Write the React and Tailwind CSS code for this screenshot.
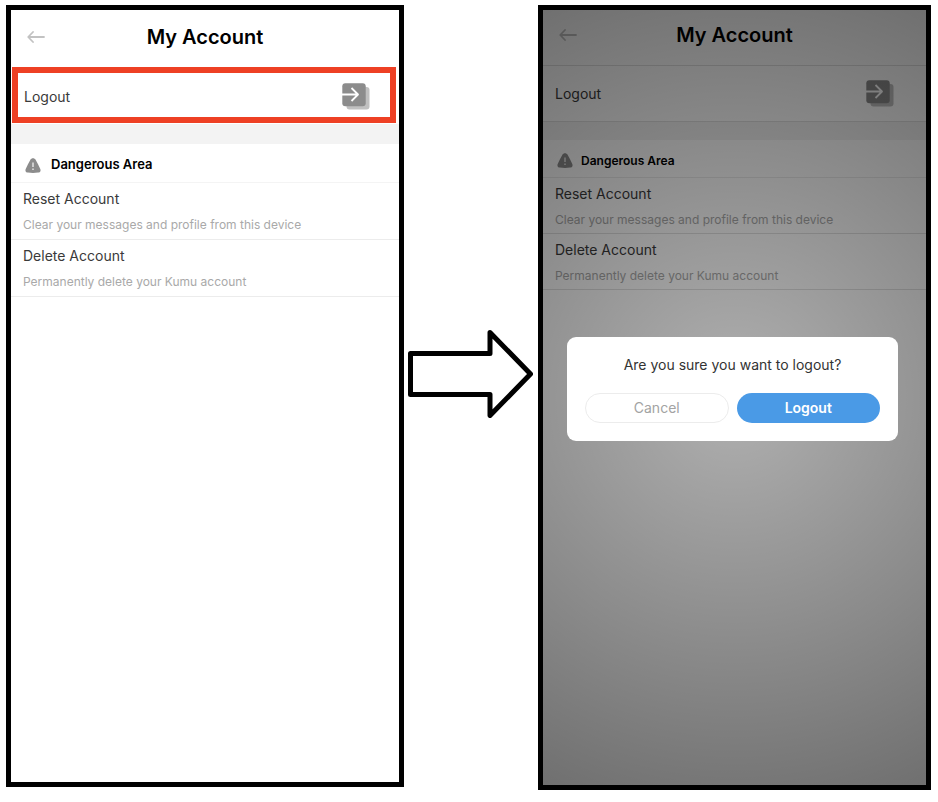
import clsx from 'clsx';

function BackIcon() {
    return (
        <svg width="18" height="12" viewBox="0 0 18 12" fill="none" stroke="#c2c2c2" strokeWidth="1.8" strokeLinecap="round" strokeLinejoin="round" aria-hidden="true">
            <path d="M17 6H1.5M6 1 1.2 6 6 11" />
        </svg>
    );
}

function LogoutIcon() {
    return (
        <svg width="28" height="27" viewBox="0 0 28 27" fill="none" aria-hidden="true">
            <rect x="4.5" y="4" width="23" height="22.5" rx="3" fill="#c0c0c0" />
            <rect x="0.3" y="0.3" width="23.4" height="23" rx="3" fill="#8c8c8c" />
            <path d="M0 11.5h16.5M9.5 5l6.5 6.5-6.5 6.5" stroke="#fff" strokeWidth="1.8" strokeLinejoin="round" />
        </svg>
    );
}

function WarningIcon() {
    return (
        <svg width="16" height="15" viewBox="0 0 16 15" aria-hidden="true">
            <path
                d="M5.4 1.7C6.5-.3 9.5-.3 10.6 1.7c1.7 2.8 3.2 5.8 4.7 9.2.8 1.9-.2 3.5-2.2 3.7-3.4.4-6.8.4-10.2 0-2-.2-3-1.8-2.2-3.7C2.2 7.5 3.7 4.5 5.4 1.7Z"
                fill="#8c8c8c"
            />
            <path d="M8 4.5V9M8 10.500V12" stroke="#e4e4e4" strokeWidth="1.5" />
        </svg>
    );
}

function ArrowRight() {
    return (
        <svg viewBox="0 0 125 88" className="w-full" fill="none" stroke="#000" strokeWidth="5" strokeLinejoin="round" aria-hidden="true">
            <path d="M2.5 23.5H82V2.5L122.5 44 82 85.5V64.5H2.5Z" />
        </svg>
    );
}

const options = [
    { title: 'Reset Account', text: 'Clear your messages and profile from this device' },
    { title: 'Delete Account', text: 'Permanently delete your Kumu account' },
];

function AccountScreen({ highlight, compact }) {
    return (
        <div className="text-[14px]">
            <header
                className={clsx(
                    'grid h-14 grid-cols-[40px_1fr_40px] items-center',
                    compact ? 'border-b border-[#e0e0e0] pb-1.5' : 'pb-0.5',
                )}
            >
                <button type="button" aria-label="Back" className="flex justify-center pl-2.5">
                    <BackIcon />
                </button>
                <h1 className="text-center text-[20px] font-semibold text-black">My Account</h1>
            </header>

            <button
                type="button"
                className={clsx(
                    'flex items-center justify-between text-[#3a3a3a]',
                    highlight
                        ? 'mx-px mt-px h-14 w-[calc(100%-4px)] border-6 border-[#ee4024] pt-0.5 pr-5 pl-1.5'
                        : 'h-14 w-full border-b border-[#e0e0e0] pr-8 pl-3',
                )}
            >
                Logout
                <LogoutIcon />
            </button>

            <div className={clsx('bg-[#f3f3f3]', compact ? 'h-[18px]' : 'mt-px h-5')} />

            <section>
                <h2
                    className={clsx(
                        'flex items-center border-b pt-1 font-semibold text-black',
                        compact
                            ? 'h-[38px] gap-2 border-[#ebebeb] px-3.5 text-[12px]'
                            : 'h-[39px] gap-2.5 border-[#f4f4f4] px-3.5 text-[13px]',
                    )}
                >
                    <WarningIcon />
                    Dangerous Area
                </h2>
                {options.map((item) => (
                    <button
                        key={item.title}
                        type="button"
                        className={clsx(
                            'block w-full border-b px-3 pt-1 text-left',
                            compact ? 'h-14 border-[#e0e0e0]' : 'h-[57px] border-[#ececec]',
                        )}
                    >
                        <span className="block leading-6 text-[#3a3a3a]">{item.title}</span>
                        <span className="block text-[12px] leading-7 text-[#a9a9a9]">{item.text}</span>
                    </button>
                ))}
            </section>
        </div>
    );
}

function LogoutDialog() {
    return (
        <div className="absolute inset-0 flex items-center bg-[radial-gradient(circle_at_50%_50%,rgba(0,0,0,0.31)_0,rgba(0,0,0,0.56)_430px)] pr-7 pb-[18px] pl-6">
            <div role="dialog" aria-labelledby="logout-question" className="w-full rounded-[9px] bg-white px-[18px] pt-4 pb-[18px]">
                <p id="logout-question" className="text-center text-[14px] leading-6 text-[#333333]">
                    Are you sure you want to logout?
                </p>
                <div className="mt-4 grid grid-cols-2 gap-2 text-[14px]">
                    <button type="button" className="h-[30px] rounded-full border border-[#ececec] text-[#a3a3a3]">
                        Cancel
                    </button>
                    <button type="button" className="h-[30px] rounded-full bg-[#4a9ae6] font-semibold text-white">
                        Logout
                    </button>
                </div>
            </div>
        </div>
    );
}

export default function App() {
    return (
        <main className="grid min-h-screen grid-cols-[398fr_134fr_393fr] bg-white pt-[5px] pr-[7px] pl-1.5 font-['Inter',sans-serif]">
            <div className="mb-[15px] border-5 border-black bg-white">
                <AccountScreen highlight />
            </div>
            <div className="flex items-center pr-[5px] pb-[59px] pl-1">
                <ArrowRight />
            </div>
            <div className="relative mb-3 border-5 border-black bg-white">
                <AccountScreen compact />
                <LogoutDialog />
            </div>
        </main>
    );
}
